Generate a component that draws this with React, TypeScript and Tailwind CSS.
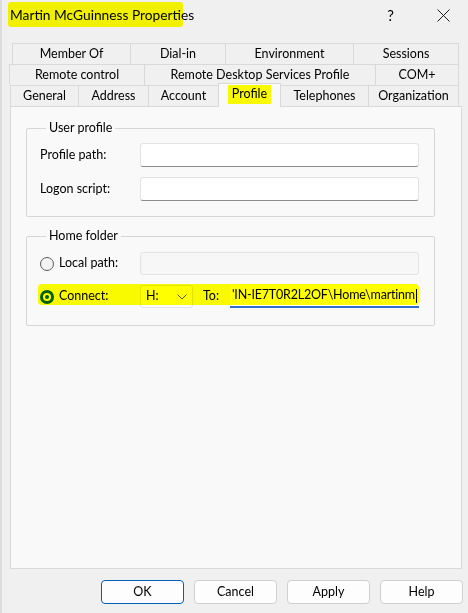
import React from 'react'

const font = { fontFamily: 'Lato, "Liberation Sans", sans-serif' }

type Tab = { label: string; w: string; active?: boolean }

const row1: Tab[] = [
  { label: 'Member Of', w: 'w-[119px]' },
  { label: 'Dial-in', w: 'w-[96px]' },
  { label: 'Environment', w: 'w-[129px]' },
  { label: 'Sessions', w: 'w-[106px]' },
]

const row2: Tab[] = [
  { label: 'Remote control', w: 'w-[136px]' },
  { label: 'Remote Desktop Services Profile', w: 'w-[232px]' },
  { label: 'COM+', w: 'w-[84px]' },
]

const row3: Tab[] = [
  { label: 'General', w: 'w-[69px]' },
  { label: 'Address', w: 'w-[71px]' },
  { label: 'Account', w: 'w-[71px]' },
  { label: 'Profile', w: 'w-[63px]', active: true },
  { label: 'Telephones', w: 'w-[89px]' },
  { label: 'Organization', w: 'w-[91px]' },
]

const TabRow: React.FC<{ tabs: Tab[]; className?: string }> = ({ tabs, className }) => (
  <div className={`flex items-end h-[21px] ${className ?? ''}`}>
    {tabs.map((tab) =>
      tab.active ? (
        <div
          key={tab.label}
          className={`${tab.w} relative z-10 -ml-px h-[24px] -mb-px flex items-center justify-center border border-b-0 border-[#d9d9d9] bg-[#f9f9f9] pb-[2px] text-[12.5px] text-black`}
        >
          <span className="relative">
            {tab.label}
            <span className="absolute -left-[4px] -right-[4px] top-[0px] bottom-[0px] bg-[#ffff00] mix-blend-multiply" />
          </span>
        </div>
      ) : (
        <div
          key={tab.label}
          className={`${tab.w} -ml-px first:ml-0 h-[21px] flex items-center justify-center border border-b-0 border-[#d9d9d9] bg-[#f0f0f0] text-[12.5px] text-black`}
        >
          {tab.label}
        </div>
      ),
    )}
  </div>
)

const TextBox: React.FC<{ className?: string; disabled?: boolean; children?: React.ReactNode }> = ({
  className,
  disabled,
  children,
}) => (
  <div
    className={`${className ?? ''} rounded-[3px] border ${
      disabled
        ? 'border-[#e3e3e3] bg-[#f7f7f7]'
        : 'border-[#e3e3e3] border-b-[#8d8d8d] bg-white'
    } flex items-center`}
  >
    {children}
  </div>
)

const Radio: React.FC<{ checked?: boolean }> = ({ checked }) =>
  checked ? (
    <span className="w-[14px] h-[14px] rounded-full bg-[#005fb8] flex items-center justify-center shrink-0">
      <span className="w-[8px] h-[8px] rounded-full bg-white flex items-center justify-center">
        <span className="w-[4px] h-[4px] rounded-full bg-[#005fb8]" />
      </span>
    </span>
  ) : (
    <span className="w-[14px] h-[14px] rounded-full border border-[#5c5c5c] bg-[#f3f3f3] shrink-0" />
  )

export default function App() {
  return (
    <div
      style={font}
      className="relative w-[468px] h-[613px] overflow-hidden bg-[#f0f0f0] border-l-[2px] border-[#dcdcdc] flex flex-col text-black"
    >
      {/* Title bar */}
      <div className="h-[30px] flex items-center pl-[8px] pr-[18px]">
        <span className="relative text-[13.75px]">
          Martin McGuinness Properties
          <span className="absolute -left-[2px] w-[175px] -top-[3px] -bottom-[2px] rounded-[3px] bg-[#ffff00] mix-blend-multiply" />
        </span>
        <span className="ml-auto text-[15px] mr-[43px]">?</span>
        <svg width="13" height="13" viewBox="0 0 13 13" className="shrink-0">
          <path d="M0.5 0.5 L12.5 12.5 M12.5 0.5 L0.5 12.5" stroke="#1a1a1a" strokeWidth="1" />
        </svg>
      </div>

      {/* Tabs */}
      <div className="mt-[13px] flex flex-col">
        <TabRow tabs={row1} className="ml-[10px]" />
        <TabRow tabs={row2} className="ml-[7px]" />
        <TabRow tabs={row3} className="ml-[8px] relative z-10" />
      </div>

      {/* Tab page */}
      <div className="ml-[8px] w-[452px] h-[463px] border border-[#d9d9d9] bg-[#f9f9f9] pl-[15px] text-[12.5px]">
        <fieldset className="mt-[13px] w-[409px] border border-[#d6d6d6] rounded-[2px] pl-[13px] pr-[15px] pt-[7px] pb-[15px] flex flex-col gap-[10px]">
          <legend className="ml-[6px] px-[3px] leading-[16px]">User profile</legend>
          <div className="flex items-center">
            <span className="w-[100px]">Profile path:</span>
            <TextBox className="w-[279px] h-[24px]" />
          </div>
          <div className="flex items-center">
            <span className="w-[100px]">Logon script:</span>
            <TextBox className="w-[279px] h-[24px]" />
          </div>
        </fieldset>

        <fieldset className="mt-[11px] w-[409px] border border-[#d6d6d6] rounded-[2px] pl-[13px] pr-[15px] pt-[8px] pb-[17px] flex flex-col gap-[10px]">
          <legend className="ml-[6px] px-[3px] leading-[16px]">Home folder</legend>
          <div className="flex items-center">
            <span className="w-[100px] flex items-center gap-[5px]">
              <Radio />
              Local path:
            </span>
            <TextBox disabled className="w-[279px] h-[23px]" />
          </div>
          <div className="relative flex items-center">
            <span className="w-[100px] flex items-center gap-[5px]">
              <Radio checked />
              Connect:
            </span>
            <TextBox className="w-[53px] h-[23px] justify-between pl-[5px] pr-[5px] border-b-[#e3e3e3]">
              <span>H:</span>
              <svg width="10" height="6" viewBox="0 0 10 6">
                <path d="M0.5 0.5 L5 5 L9.5 0.5" fill="none" stroke="#555" strokeWidth="1" />
              </svg>
            </TextBox>
            <span className="ml-[10px] w-[27px]">To:</span>
            <div className="w-[189px] h-[23px] flex items-center pl-[2px] bg-white border-b-[2px] border-[#2e6fcc] whitespace-nowrap overflow-hidden tracking-[-0.2px]">
              'IN-IE7T0R2L2OF\Home\martinm
              <span className="ml-px w-px h-[14px] bg-black" />
            </div>
            <span className="absolute -left-[2px] right-[0px] -top-[1px] bottom-[3px] rounded-[4px] bg-[#ffff00] mix-blend-multiply" />
          </div>
        </fieldset>
      </div>

      {/* Buttons */}
      <div className="mt-[11px] flex justify-end gap-[10px] pr-[5px] text-[12.5px]">
        <button className="w-[83px] h-[24px] rounded-[4px] border-[1.5px] border-[#005fb8] bg-[#fdfdfd]">OK</button>
        <button className="w-[83px] h-[24px] rounded-[4px] border border-[#d0d0d0] bg-[#fdfdfd]">Cancel</button>
        <button className="w-[83px] h-[24px] rounded-[4px] border border-[#d0d0d0] bg-[#fdfdfd]">Apply</button>
        <button className="w-[83px] h-[24px] rounded-[4px] border border-[#d0d0d0] bg-[#fdfdfd]">Help</button>
      </div>
    </div>
  )
}
